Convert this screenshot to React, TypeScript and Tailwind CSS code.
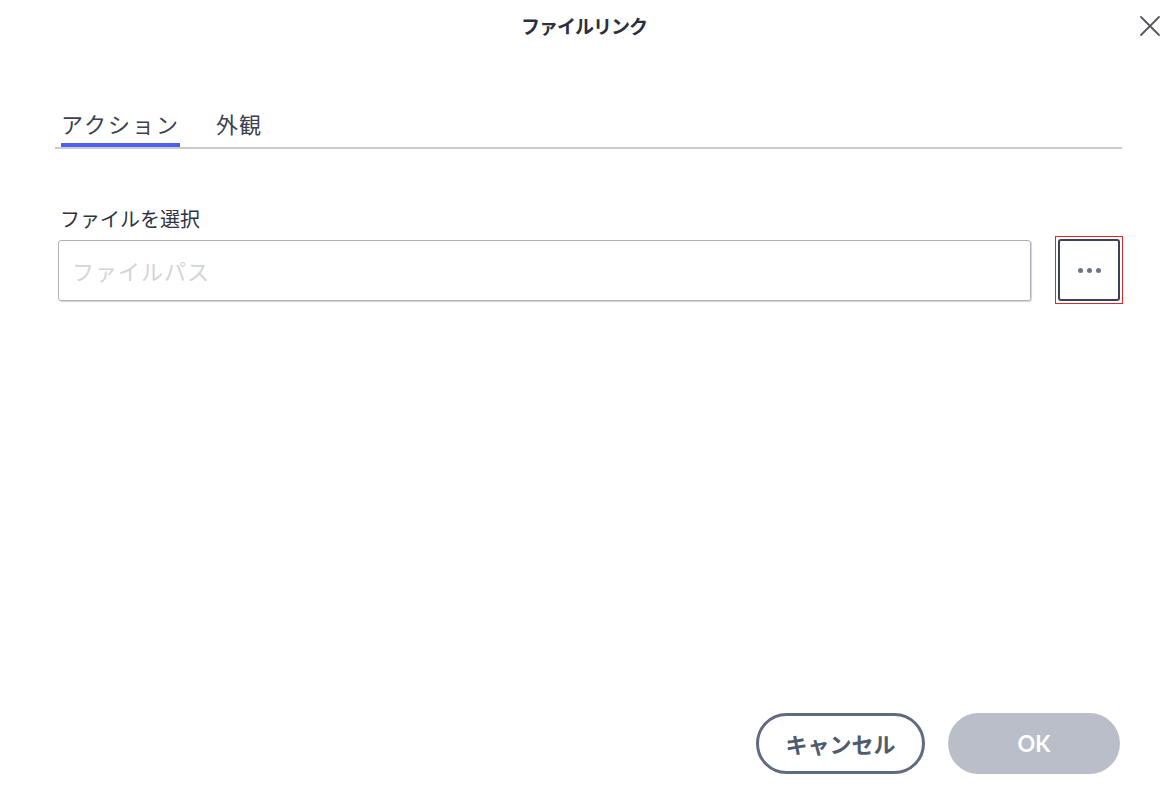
const font = "font-['Noto_Sans_CJK_JP','Noto_Sans',sans-serif]";

export default function App() {
	return (
		<div className={`w-[1174px] h-[800px] bg-white flex flex-col ${font}`}>
			<header className="h-[52px] grid grid-cols-[1fr_auto_1fr] items-center">
				<div />
				<h1 className="text-[19px] font-bold text-[#2b3040] tracking-[-1px] mr-[6px]">ファイルリンク</h1>
				<div className="flex justify-end pr-[13px]">
					<button type="button" className="text-[#55585f]">
						<svg width="22" height="22" viewBox="0 0 22 22" fill="none" stroke="currentColor" strokeWidth="1.8" strokeLinecap="round">
							<path d="M2 2L20 20M20 2L2 20" />
						</svg>
					</button>
				</div>
			</header>

			<nav className="mt-[56px] ml-[55px] mr-[52px] border-b-2 border-[#cacbd0] flex items-end gap-[36px]">
				<button type="button" className="ml-[6px] text-[22px] leading-[30px] tracking-[2px] text-[#3c4150] pb-[5px] border-b-4 border-[#4f5ff2]">
					アクション
				</button>
				<button type="button" className="text-[22px] leading-[30px] tracking-[1px] text-[#3c4150] pb-[9px]">
					外観
				</button>
			</nav>

			<section className="mt-[56px] ml-[58px] mr-[51px]">
				<label className="block ml-[2px] text-[20px] leading-[28px] text-[#2f3442]">ファイルを選択</label>
				<div className="mt-[3px] flex items-center gap-[24px]">
					<input
						className="flex-1 min-w-0 h-[61px] px-[13px] rounded-[3px] border border-[#aeb2be] shadow-[1px_1px_1px_rgba(0,0,0,0.18)] text-[22px] tracking-[1px] text-[#333] placeholder:text-[#d3d4d8] outline-none"
						placeholder="ファイルパス"
					/>
					<div className="shrink-0 p-[2px] border border-[#e0262a]">
						<button type="button" className="w-[62px] h-[62px] rounded-[3px] border-2 border-[#3b4256] flex items-center justify-center gap-[4px]">
							<span className="w-[5px] h-[5px] rounded-full bg-[#6f7484]" />
							<span className="w-[5px] h-[5px] rounded-full bg-[#6f7484]" />
							<span className="w-[5px] h-[5px] rounded-full bg-[#6f7484]" />
						</button>
					</div>
				</div>
			</section>

			<footer className="mt-auto pb-[26px] pr-[54px] flex justify-end gap-[23px]">
				<button type="button" className="w-[169px] h-[61px] rounded-full border-[3px] border-[#5f6b80] text-[22px] font-bold text-[#4f5a6e]">
					キャンセル
				</button>
				<button type="button" className="w-[172px] h-[61px] rounded-full bg-[#b9bec9] text-[22px] font-bold text-white font-['Lato',sans-serif]">
					OK
				</button>
			</footer>
		</div>
	);
}
